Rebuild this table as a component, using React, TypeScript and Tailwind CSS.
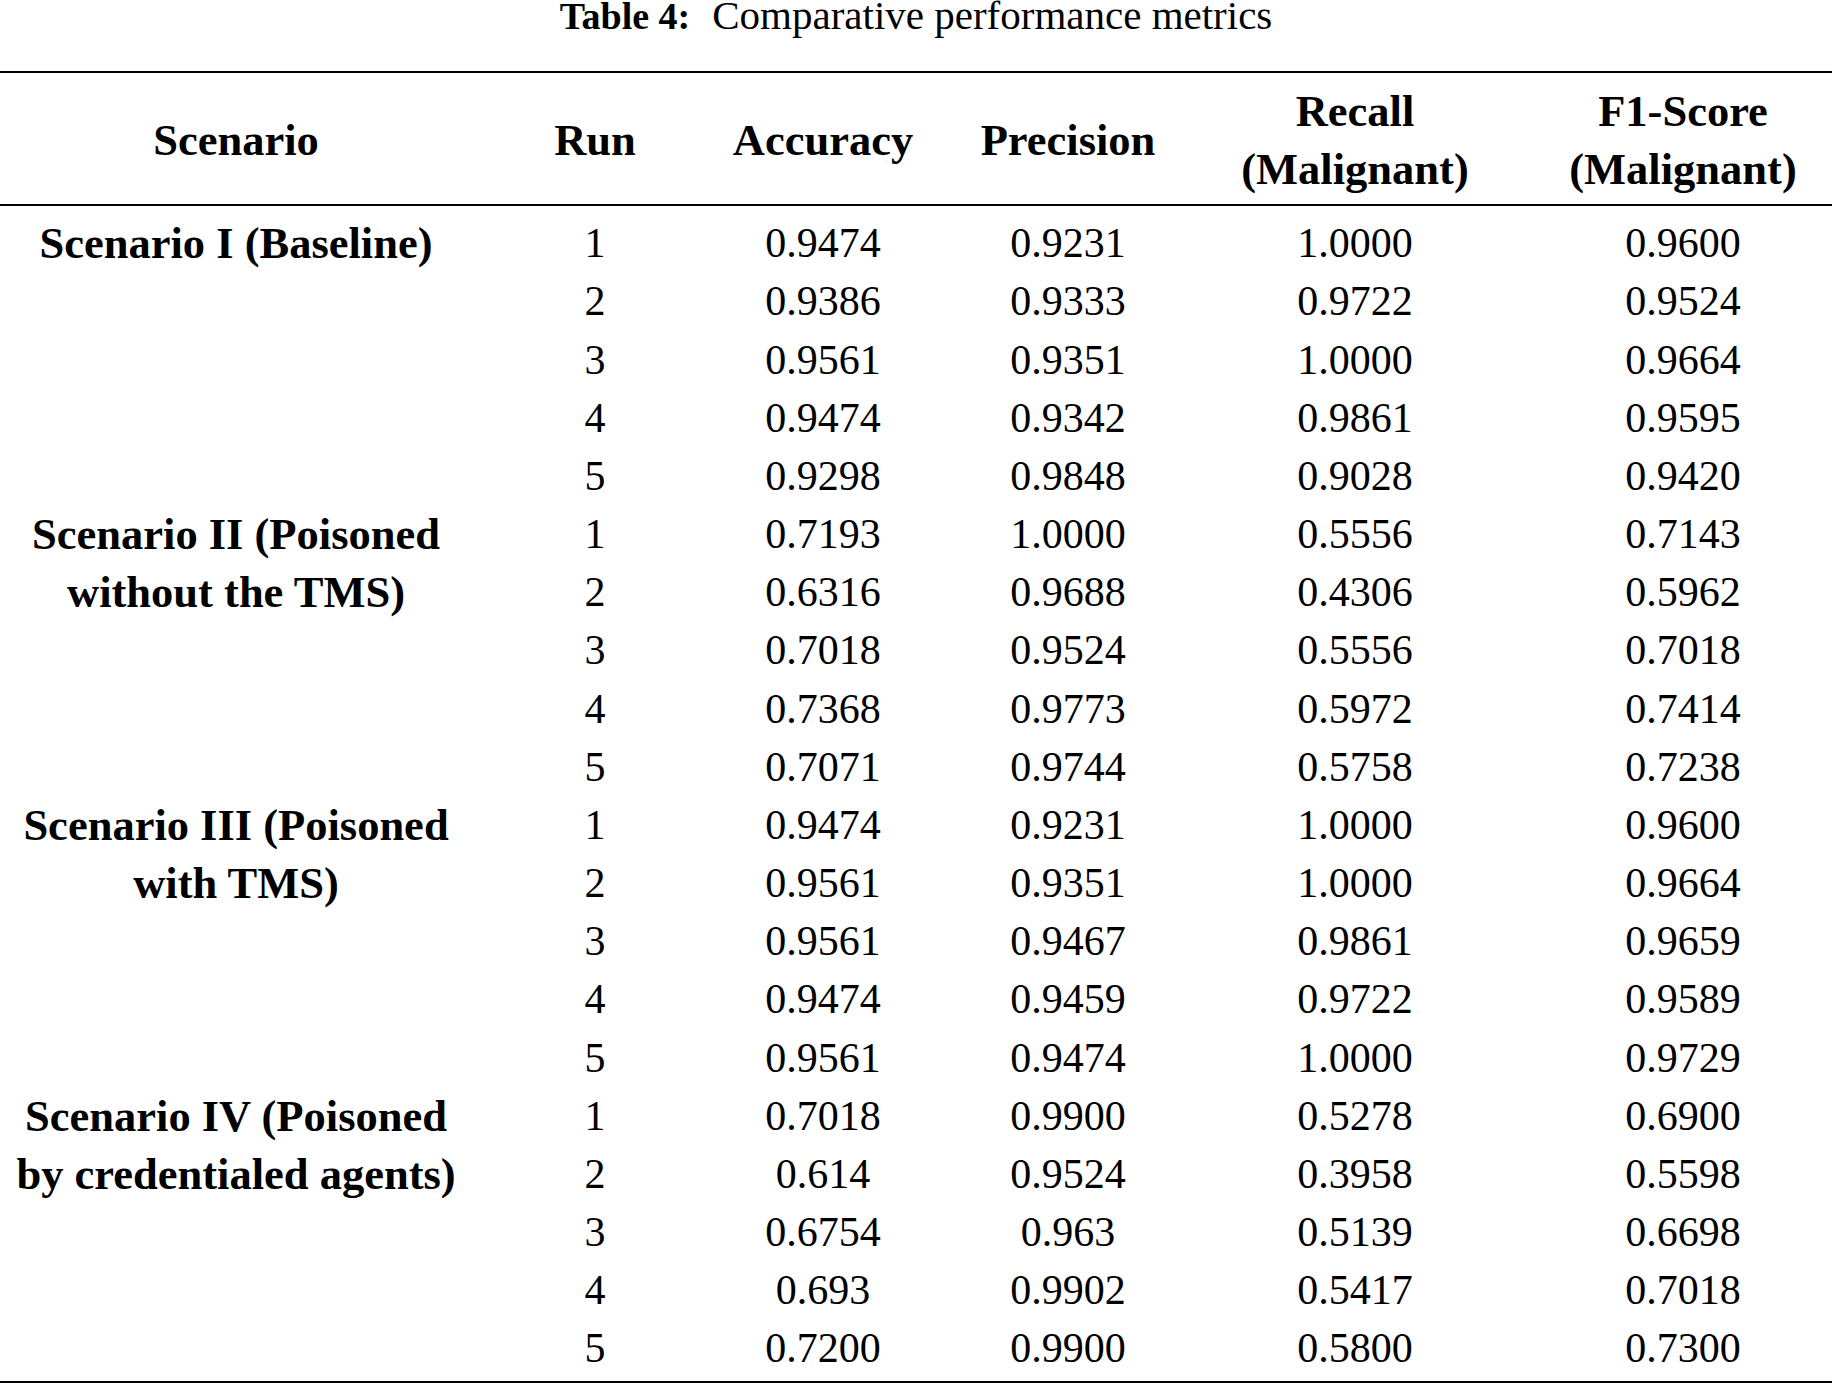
import React from "react";

type Group = { name: string[]; rows: string[][] };

const groups: Group[] = [
  {
    name: ["Scenario I (Baseline)"],
    rows: [
      ["1", "0.9474", "0.9231", "1.0000", "0.9600"],
      ["2", "0.9386", "0.9333", "0.9722", "0.9524"],
      ["3", "0.9561", "0.9351", "1.0000", "0.9664"],
      ["4", "0.9474", "0.9342", "0.9861", "0.9595"],
      ["5", "0.9298", "0.9848", "0.9028", "0.9420"],
    ],
  },
  {
    name: ["Scenario II (Poisoned", "without the TMS)"],
    rows: [
      ["1", "0.7193", "1.0000", "0.5556", "0.7143"],
      ["2", "0.6316", "0.9688", "0.4306", "0.5962"],
      ["3", "0.7018", "0.9524", "0.5556", "0.7018"],
      ["4", "0.7368", "0.9773", "0.5972", "0.7414"],
      ["5", "0.7071", "0.9744", "0.5758", "0.7238"],
    ],
  },
  {
    name: ["Scenario III (Poisoned", "with TMS)"],
    rows: [
      ["1", "0.9474", "0.9231", "1.0000", "0.9600"],
      ["2", "0.9561", "0.9351", "1.0000", "0.9664"],
      ["3", "0.9561", "0.9467", "0.9861", "0.9659"],
      ["4", "0.9474", "0.9459", "0.9722", "0.9589"],
      ["5", "0.9561", "0.9474", "1.0000", "0.9729"],
    ],
  },
  {
    name: ["Scenario IV (Poisoned", "by credentialed agents)"],
    rows: [
      ["1", "0.7018", "0.9900", "0.5278", "0.6900"],
      ["2", "0.614", "0.9524", "0.3958", "0.5598"],
      ["3", "0.6754", "0.963", "0.5139", "0.6698"],
      ["4", "0.693", "0.9902", "0.5417", "0.7018"],
      ["5", "0.7200", "0.9900", "0.5800", "0.7300"],
    ],
  },
];

const colW = ["w-[246px]", "w-[210px]", "w-[280px]", "w-[294px]", "w-[330px] pl-[32px]"];

export default function App() {
  return (
    <div
      className="w-[1832px] bg-white text-black"
      style={{ fontFamily: '"Liberation Serif", "Times New Roman", serif' }}
    >
      <div className="h-[71px] flex justify-center">
        <div className="leading-[30px] whitespace-nowrap">
          <span className="font-bold text-[38px]">Table 4:</span>
          <span className="ml-[22px] text-[41px]">Comparative performance metrics</span>
        </div>
      </div>
      <div className="h-[2px] bg-black" />
      <div className="flex pt-[9px] pb-[6px] font-bold text-[44.5px] leading-[58.16px]">
        <div className="w-[472px] flex items-center justify-center">Scenario</div>
        <div className="w-[246px] flex items-center justify-center">Run</div>
        <div className="w-[210px] flex items-center justify-center">Accuracy</div>
        <div className="w-[280px] flex items-center justify-center">Precision</div>
        <div className="w-[294px] flex flex-col items-center justify-center">
          <span>Recall</span>
          <span>(Malignant)</span>
        </div>
        <div className="w-[330px] pl-[32px] flex flex-col items-center justify-center">
          <span>F1-Score</span>
          <span>(Malignant)</span>
        </div>
      </div>
      <div className="h-[2px] bg-black" />
      <div className="pt-[8px] pb-[4px]">
        {groups.map((g, gi) => (
          <div key={gi} className="flex">
            <div className="w-[472px] flex flex-col items-center font-bold text-[44.5px] leading-[58.16px] whitespace-nowrap">
              {g.name.map((l, li) => (
                <span key={li}>{l}</span>
              ))}
            </div>
            <div className="flex flex-col">
              {g.rows.map((r, ri) => (
                <div key={ri} className="flex text-[42px] leading-[58.16px]">
                  {r.map((c, ci) => (
                    <div key={ci} className={`${colW[ci]} text-center`}>
                      {c}
                    </div>
                  ))}
                </div>
              ))}
            </div>
          </div>
        ))}
      </div>
      <div className="h-[2px] bg-black" />
    </div>
  );
}
